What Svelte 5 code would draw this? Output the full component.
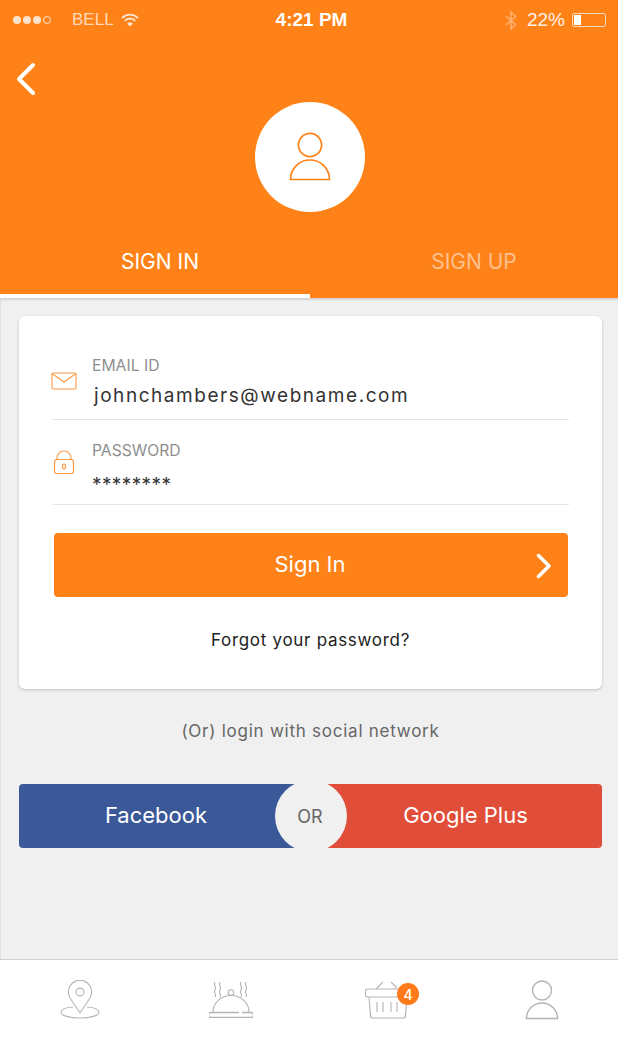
<script>
  const tabs = [
    { label: 'SIGN IN', active: true },
    { label: 'SIGN UP', active: false }
  ];
</script>

<div class="page">
  <header class="top">
    <div class="status">
      <div class="status-left">
        <span class="dots"><i></i><i></i><i></i><i class="empty"></i></span>
        <span class="carrier">BELL</span>
        <svg class="wifi" width="18" height="14" viewBox="0 0 18 14" fill="none" stroke="#fff" stroke-width="1.8" opacity="0.8">
          <path d="M1 5a11.300 11.300 0 0 1 16 0" />
          <path d="M3.700 7.800a7.500 7.500 0 0 1 10.600 0" />
          <path d="M9 13.600 6.200 10.700a4 4 0 0 1 5.600 0z" fill="#fff" stroke="none" />
        </svg>
      </div>
      <div class="time">4:21 PM</div>
      <div class="status-right">
        <svg width="12" height="19" viewBox="0 0 12 19" fill="none" stroke="#fff" stroke-width="1.4" opacity="0.4">
          <path d="M1 5l9.500 8.600L6 18V1l4.500 4.400L1 14" />
        </svg>
        <span class="pct">22%</span>
        <span class="battery"><span class="level"></span></span>
      </div>
    </div>

    <div class="back-row">
      <svg width="20" height="34" viewBox="0 0 20 34" fill="none" stroke="#fff" stroke-width="4" stroke-linecap="round" stroke-linejoin="round">
        <path d="M17 3 3 17l14 14" />
      </svg>
    </div>

    <div class="avatar">
      <svg width="42" height="50" viewBox="0 0 42 50" fill="none" stroke="#ff8219" stroke-width="1.7">
        <circle cx="21" cy="13" r="11.600" />
        <path d="M1.500 47.500a19.500 19.500 0 0 1 39 0z" />
      </svg>
    </div>

    <nav class="tabs">
      {#each tabs as t}
        <div class="tab" class:active={t.active}>{t.label}</div>
      {/each}
    </nav>
  </header>

  <main class="content">
    <section class="card">
      <div class="field">
        <svg class="field-icon" width="26" height="18" viewBox="0 0 26 18" fill="none" stroke="#ff9a45" stroke-width="1.100">
          <rect x="1" y="1" width="24" height="16" rx="1" />
          <path d="M1 1.500 13 10 25 1.500" />
        </svg>
        <div class="field-body">
          <div class="label">EMAIL ID</div>
          <div class="value">johnchambers@webname.com</div>
        </div>
      </div>
      <div class="field second">
        <svg class="field-icon lock" width="22" height="25" viewBox="0 0 22 25" fill="none" stroke="#ff9a45" stroke-width="1.200">
          <rect x="1.500" y="9.500" width="19" height="14" rx="2.500" />
          <path d="M4 9.500V8a7 7 0 0 1 14 0v1.500" />
          <rect x="9.500" y="14" width="3" height="5" rx="1.200" />
        </svg>
        <div class="field-body">
          <div class="label">PASSWORD</div>
          <div class="value stars">********</div>
        </div>
      </div>

      <button class="signin">
        Sign In
        <svg class="chev" width="16" height="26" viewBox="0 0 16 26" fill="none" stroke="#fff" stroke-width="3.500" stroke-linecap="round" stroke-linejoin="round">
          <path d="M3.500 2.500 14 13 3.500 23.500" />
        </svg>
      </button>

      <div class="forgot">Forgot your password?</div>
    </section>

    <p class="social-note">(Or) login with social network</p>

    <div class="social">
      <div class="fb">Facebook</div>
      <div class="gp">Google Plus</div>
      <div class="or">OR</div>
    </div>
  </main>

  <footer class="bottom">
    <svg width="40" height="40" viewBox="0 0 40 40" fill="none" stroke="#b4b4b4" stroke-width="1.100">
      <path d="M20 33 10 18a11.700 11.700 0 1 1 20 0z" stroke-linejoin="round" />
      <circle cx="20" cy="12" r="3.900" />
      <path d="M13 27C5.500 27.500 1 29.500 1 32.500 1 35.500 9.500 38 20 38s19-2.500 19-5.500c0-3-4.500-5-12-5.500" />
    </svg>
    <svg width="44" height="36" viewBox="0 0 44 36" fill="none" stroke="#b4b4b4" stroke-width="1.100">
      <path d="M6 0c-2 3 2 5 0 8s2 4 0 7M11 0c-2 3 2 5 0 8s2 4 0 7M32 0c-2 3 2 5 0 8s2 4 0 7M37 0c-2 3 2 5 0 8s2 4 0 7" />
      <circle cx="22" cy="10.500" r="2.800" />
      <path d="M4 30a18 16.500 0 0 1 36 0" />
      <path d="M30 30.500H2a2.500 2.500 0 0 0 0 5h40a2.500 2.500 0 0 0 0-5h-9" stroke-width="1.300" />
    </svg>
    <div class="basket">
      <svg width="44" height="38" viewBox="0 0 44 38" fill="none" stroke="#b4b4b4" stroke-width="1.100">
        <path d="M11 8l7-7M26 1l6 6" />
        <rect x="0.500" y="8" width="43" height="8" rx="2" />
        <path d="M4 16l1.500 19a2 2 0 0 0 2 2h31a2 2 0 0 0 2-2l1.500-19" />
        <path d="M12 21v10M18 21v10M26 21v10M32 21v10" />
      </svg>
      <span class="badge">4</span>
    </div>
    <svg width="34" height="40" viewBox="0 0 34 40" fill="none" stroke="#b4b4b4" stroke-width="1.400">
      <circle cx="17" cy="10.500" r="9.500" />
      <path d="M1.500 38.500a15.500 15.500 0 0 1 31 0z" />
    </svg>
  </footer>
</div>

<style>
  :global(body) {
    margin: 0;
    background: #f0f0f0;
    font-family: "Inter", "Open Sans", sans-serif;
  }

  .page {
    width: 618px;
    height: 1040px;
    display: flex;
    flex-direction: column;
    background: #f0f0f0;
  }

  .top {
    position: relative;
    height: 298px;
    flex: none;
    background: #ff8219;
    box-shadow: 0 1px 3px rgba(0, 0, 0, 0.2);
    display: flex;
    flex-direction: column;
  }

  .status {
    height: 40px;
    display: grid;
    grid-template-columns: 1fr auto 1fr;
    align-items: center;
    padding: 0 12px 0 13px;
    font-family: "Liberation Sans", sans-serif;
    font-size: 17px;
    color: #fff;
  }
  .status-left { display: flex; align-items: center; }
  .dots { display: flex; gap: 2px; width: 41px; margin-right: 18px; }
  .dots i {
    width: 8px;
    height: 8px;
    border-radius: 50%;
    background: #fde3cd;
    box-sizing: border-box;
  }
  .dots i.empty { background: none; border: 1px solid #fde3cd; }
  .carrier { color: #fdd9b9; margin-right: 7px; }
  .wifi { display: block; }
  .time { font-weight: 700; font-size: 19px; padding-left: 4px; }
  .status-right { display: flex; align-items: center; justify-content: flex-end; gap: 10px; }
  .pct { color: #fff0e2; font-size: 19px; margin-right: -3px; }
  .battery {
    width: 30px;
    height: 10px;
    border: 1px solid #fdd9b9;
    border-radius: 2px;
    padding: 1px;
    display: block;
  }
  .level { display: block; width: 7px; height: 100%; background: #fff; }

  .back-row { height: 62px; padding: 22px 0 0 16px; box-sizing: border-box; }
  .back-row svg { display: block; }

  .avatar {
    width: 110px;
    height: 110px;
    border-radius: 50%;
    background: #fff;
    align-self: center;
    margin-left: 2px;
    display: flex;
    align-items: center;
    justify-content: center;
  }

  .tabs { display: flex; margin-top: auto; height: 86px; }
  .tab {
    flex: 0 0 308px;
    height: 86px;
    box-sizing: border-box;
    padding: 37px 0 0 20px;
    text-align: center;
    font-size: 21px;
    color: rgba(255, 255, 255, 0.5);
  }
  .tab.active { flex-basis: 310px; padding-left: 10px; color: #fff; border-bottom: 4px solid #fff; }

  .content {
    flex: 1;
    padding: 18px 16px 0 18px;
    border-left: 1px solid #e2e2e2;
  }

  .card {
    background: #fff;
    border-radius: 6px;
    box-shadow: 0 1px 3px rgba(0, 0, 0, 0.22);
    height: 373px;
    box-sizing: border-box;
    padding: 0 33px 0 33px;
    display: flex;
    flex-direction: column;
  }

  .field {
    height: 85px;
    padding-top: 19px;
    box-sizing: border-box;
    border-bottom: 1px solid #e4e4e4;
    display: flex;
    margin: 19px 0 0 1px;
  }
  .field.second { margin-top: 0; }
  .field-icon { flex: none; margin-top: 18px; width: 26px; margin-left: -2px; }
  .field-icon.lock { margin-top: 11px; }
  .field-body { margin-left: 15px; }
  .label { font-size: 15.7px; color: #8f8f8f; line-height: 20px; margin-top: 2px; }
  .value {
    font-size: 19px;
    color: #333;
    letter-spacing: 1.55px;
    line-height: 24px;
    margin-top: 8px;
    margin-left: 2px;
  }
  .value.stars { margin-left: 0; margin-top: 12px; letter-spacing: 0.4px; }

  .signin {
    position: relative;
    margin-top: 28px;
    margin-left: 2px;
    width: 514px;
    height: 64px;
    flex: none;
    border: 0;
    border-radius: 4px;
    padding: 0 2px 3px 0;
    background: #ff8219;
    color: #fff;
    font-family: inherit;
    font-size: 22px;
  }
  .chev { position: absolute; right: 17px; top: 20px; }

  .forgot {
    margin-top: 33px;
    text-align: center;
    font-size: 17px;
    letter-spacing: 0.7px;
    color: #222;
    line-height: 20px;
  }

  .social-note {
    margin: 32px 0 0;
    text-align: center;
    font-size: 17px;
    letter-spacing: 0.75px;
    line-height: 20px;
    color: #666;
  }

  .social {
    position: relative;
    margin-top: 43px;
    height: 64px;
    border-radius: 4px;
    overflow: hidden;
    display: flex;
    color: #fff;
    font-size: 22px;
  }
  .fb {
    flex: 0 0 292px;
    background: #3b5998;
    display: flex;
    align-items: center;
    justify-content: center;
    padding: 0 18px 2px 0;
    box-sizing: border-box;
  }
  .gp {
    flex: 1;
    background: #e04e39;
    display: flex;
    align-items: center;
    justify-content: center;
    padding: 0 0 2px 18px;
    box-sizing: border-box;
  }
  .or {
    position: absolute;
    left: 256px;
    top: -4px;
    width: 72px;
    height: 72px;
    border-radius: 50%;
    background: #f0f0f0;
    color: #666;
    font-size: 18px;
    display: flex;
    align-items: center;
    justify-content: center;
    padding-right: 2px;
    box-sizing: border-box;
  }

  .bottom {
    height: 81px;
    flex: none;
    box-sizing: border-box;
    background: #fff;
    border-top: 1px solid #cfcfcf;
    display: grid;
    grid-template-columns: 160px 142px 170px 140px;
    align-items: center;
    justify-items: center;
  }
  .basket { position: relative; width: 44px; height: 38px; }
  .basket svg { display: block; }
  .badge {
    position: absolute;
    left: 32px;
    top: 2px;
    width: 22px;
    height: 22px;
    border-radius: 50%;
    background: #ff7a1a;
    color: #fff;
    font-size: 14px;
    font-weight: 500;
    display: flex;
    align-items: center;
    justify-content: center;
  }
</style>
